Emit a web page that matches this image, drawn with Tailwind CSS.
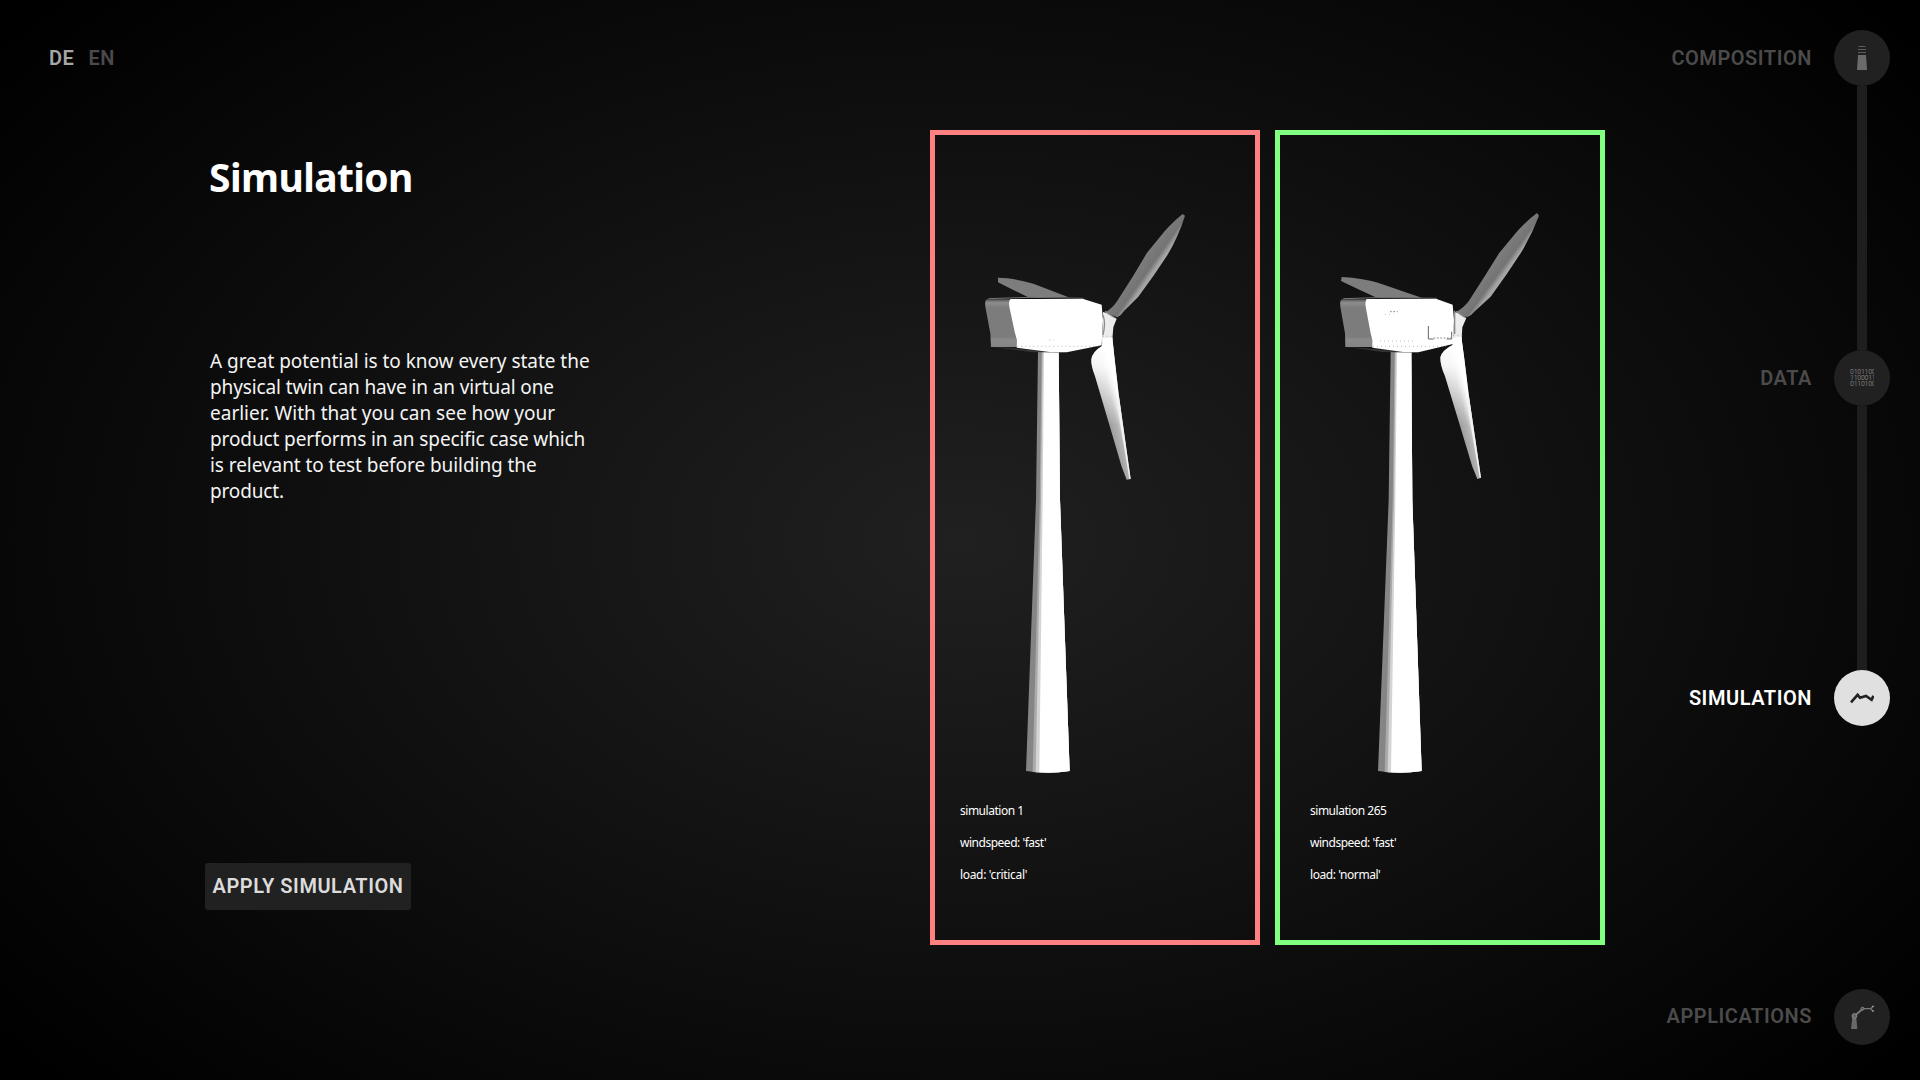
<!DOCTYPE html>
<html lang="en">
<head>
<meta charset="utf-8">
<title>Simulation</title>
<script src="https://cdn.jsdelivr.net/npm/@tailwindcss/browser@4"></script>
</head>
<body class="flex h-screen w-screen overflow-hidden bg-black bg-[radial-gradient(1240px_800px_at_center,#202020,#000)] font-['Noto_Sans',sans-serif] text-white">

<!-- Language switch and description -->
<main class="flex w-[930px] shrink-0 flex-col">
  <header class="flex h-[116px] items-center gap-[14px] pl-[49px] font-[Roboto,sans-serif] text-xl font-semibold tracking-[0.54px]">
    <button class="text-[#a6a6a6]">DE</button>
    <button class="text-[#4b4b4b]">EN</button>
  </header>
  <section class="flex flex-col items-start pl-[205px]">
    <h1 class="mt-[34px] pl-1 text-[39px] leading-[54px] font-bold tracking-[-0.6px]">Simulation</h1>
    <p class="mt-[144px] flex flex-col pl-[5px] text-[19px] leading-[26px] whitespace-nowrap text-[#f4f4f4]">
      <span class="tracking-[-0.03px]">A great potential is to know every state the</span>
      <span class="tracking-[-0.12px]">physical twin can have in an virtual one</span>
      <span>earlier. With that you can see how your</span>
      <span class="tracking-[-0.11px]">product performs in an specific case which</span>
      <span class="tracking-[-0.06px]">is relevant to test before building the</span>
      <span class="tracking-[-0.15px]">product.</span>
    </p>
    <button class="mt-[359px] flex h-[47px] w-[206px] items-center justify-center rounded-[3px] bg-[#212121] pb-px font-[Roboto,sans-serif] text-xl font-semibold tracking-[0.54px] text-[#dcdcdc]">APPLY SIMULATION</button>
  </section>
</main>

<!-- Simulation variants -->
<section class="flex shrink-0 gap-[15px] pt-[130px]">
  <article class="flex h-[815px] w-[330px] flex-col border-5 border-[#ff8080]">
    <svg class="h-[650px] w-[320px] shrink-0" viewBox="45 45 960 1950">
      <defs>
        <linearGradient id="bladeUp" gradientUnits="userSpaceOnUse" x1="650" y1="420" x2="700" y2="455">
          <stop offset="0" stop-color="#808080"/><stop offset=".75" stop-color="#747474"/><stop offset="1" stop-color="#a5a5a5"/>
        </linearGradient>
        <linearGradient id="bladeDown" gradientUnits="userSpaceOnUse" x1="535" y1="865" x2="612" y2="845">
          <stop offset="0" stop-color="#8a8a8a"/><stop offset=".55" stop-color="#b4b4b4"/><stop offset=".85" stop-color="#fff"/>
        </linearGradient>
        <linearGradient id="bladeRoot" x1="0" y1="0" x2="0" y2="1">
          <stop offset="0" stop-color="#fff"/><stop offset=".2" stop-color="#fff" stop-opacity=".9"/><stop offset=".62" stop-color="#fff" stop-opacity="0"/>
        </linearGradient>
        <linearGradient id="tail" x1="0" y1="0" x2="0" y2="1">
          <stop offset="0" stop-color="#555"/><stop offset=".07" stop-color="#8d8d8d"/><stop offset=".18" stop-color="#7c7c7c"/><stop offset=".78" stop-color="#7c7c7c"/><stop offset=".85" stop-color="#8a8a8a"/><stop offset="1" stop-color="#858585"/>
        </linearGradient>
      </defs>
      <path fill="#7d7d7d" d="M234 473 262 475Q325 484 352 496L446 532H325L280 510 234 487Z"/>
      <path fill="url(#bladeUp)" d="M788 282 795 287Q775 350 742 406L700 468 655 530 612 573Q602 588 592 592L556 577Q580 562 592 542L640 467 680 400 735 332Q765 300 788 282Z"/>
      <path fill="#858585" d="M354 695H416L420 1140 449 1953Q384 1962 318 1953L348 1140Z"/>
      <path fill="#aaa" d="M365 695H416L420 1140 449 1953Q400 1961 338 1956L359 1140Z"/>
      <path fill="#d4d4d4" d="M368 695H416L420 1140 449 1953Q400 1961 347 1957L363 1140Z"/>
      <path fill="#fff" d="M372 695H416L420 1140 449 1953Q400 1961 358 1957L368 1140Z"/>
      <path fill="#333" d="M213 680 440 698 330 696Z"/>
      <path fill="url(#tail)" d="M200 538H272L292 681H213L211 640 196 560Q194 542 200 538Z"/>
      <path fill="#fff" d="M272 537H490L545 554 549 600 545 676 440 697H395L290 683Q292 660 285 640L268 560Q265 540 272 537Z"/>
      <path stroke="#777" stroke-width="3" d="M205 536 330 532 490 535"/>
      <path fill="#ececec" d="M549 576 562 580 590 596 580 622 577 658 545 668 549 610Z"/>
      <path fill="none" stroke="#8b8b8b" stroke-width="4" d="M549 585Q558 610 549 645M555 574 585 594"/>
      <path fill="url(#bladeDown)" d="M550 655 577 653 583 710 597 830 632 1077 620 1079 605 1040 525 768Q513 738 514 718 518 695 545 679Z"/>
      <path fill="url(#bladeRoot)" d="M550 655 577 653 583 710 597 830 632 1077 620 1079 605 1040 525 768Q513 738 514 718 518 695 545 679Z"/>
      <path fill="#f2f2f2" d="M597 830 632 1077 628 1077 590 845Z"/>
      <path fill="none" stroke="#999" stroke-width="2" stroke-dasharray="3 9" d="M292 679H545M548 649H578M388 660H402"/>
    </svg>
    <div class="flex flex-col gap-[10px] pt-[15px] pl-[25px] text-xs leading-[22px] tracking-[-0.48px] text-white">
      <p>simulation 1</p>
      <p>windspeed: 'fast'</p>
      <p class="tracking-[-0.33px]">load: 'critical'</p>
    </div>
  </article>

  <article class="flex h-[815px] w-[330px] flex-col border-5 border-[#80ff80]">
    <svg class="h-[650px] w-[320px] shrink-0" viewBox="45 45 960 1950">
      <defs>
        <linearGradient id="bladeUp2" gradientUnits="userSpaceOnUse" x1="674" y1="420" x2="722" y2="455">
          <stop offset="0" stop-color="#808080"/><stop offset=".75" stop-color="#747474"/><stop offset="1" stop-color="#a5a5a5"/>
        </linearGradient>
        <linearGradient id="bladeDown2" gradientUnits="userSpaceOnUse" x1="550" y1="865" x2="627" y2="845">
          <stop offset="0" stop-color="#8a8a8a"/><stop offset=".55" stop-color="#b4b4b4"/><stop offset=".85" stop-color="#fff"/>
        </linearGradient>
      </defs>
      <path fill="#7d7d7d" d="M230 471 262 473Q325 481 352 493L470 533H335L280 508 228 483Z"/>
      <path fill="url(#bladeUp2)" d="M816 279 822 287Q800 345 768 398L725 463 677 530 630 573Q618 588 606 592L572 577Q598 562 612 542L660 467 702 400 758 332Q790 298 816 279Z"/>
      <path fill="#858585" d="M377 695H439L442 1140 470 1953Q405 1962 339 1953L371 1140Z"/>
      <path fill="#aaa" d="M389 695H439L442 1140 470 1953Q420 1961 359 1956L383 1140Z"/>
      <path fill="#d4d4d4" d="M392 695H439L442 1140 470 1953Q420 1961 368 1957L387 1140Z"/>
      <path fill="#fff" d="M396 695H439L442 1140 470 1953Q420 1961 378 1957L391 1140Z"/>
      <path fill="#333" d="M242 680 465 698 352 696Z"/>
      <path fill="url(#tail)" d="M230 538H306L324 681H241L240 640 226 560Q224 542 230 538Z"/>
      <path fill="#fff" d="M306 537H515L563 554 567 600 564 672 460 697H420L322 683Q324 660 317 640L302 560Q300 540 306 537Z"/>
      <path stroke="#777" stroke-width="3" d="M235 536 335 533 515 535"/>
      <path fill="#ececec" d="M568 576 580 580 604 594 592 622 590 658 563 668 567 610Z"/>
      <path fill="none" stroke="#8b8b8b" stroke-width="4" d="M569 572V642M574 574 600 592"/>
      <path fill="url(#bladeDown2)" d="M563 655 589 650 597 710 612 830 648 1073 637 1077 622 1040 540 768Q526 738 526 712 530 692 563 675Z"/>
      <path fill="url(#bladeRoot)" d="M563 655 589 650 597 710 612 830 648 1073 637 1077 622 1040 540 768Q526 738 526 712 530 692 563 675Z"/>
      <path fill="#f2f2f2" d="M612 830 648 1073 644 1073 605 845Z"/>
      <path fill="none" stroke="#666" stroke-width="3" d="M490 618V657H506M560 635V657H545"/>
      <path fill="none" stroke="#888" stroke-width="3" stroke-dasharray="5 5" d="M506 654H560M375 575H398"/>
      <path fill="none" stroke="#999" stroke-width="2" stroke-dasharray="3 9" d="M324 679H560M345 663H450M360 583H385M565 646H592"/>
    </svg>
    <div class="flex flex-col gap-[10px] pt-[15px] pl-[30px] text-xs leading-[22px] tracking-[-0.48px] text-white">
      <p>simulation 265</p>
      <p>windspeed: 'fast'</p>
      <p class="tracking-[-0.44px]">load: 'normal'</p>
    </div>
  </article>
</section>

<!-- Chapter navigation -->
<nav class="ml-auto flex flex-col items-end pt-[30px] pr-[30px] font-[Roboto,sans-serif] text-xl font-semibold tracking-[0.54px] text-[#4b4b4b]">
  <a class="flex h-14 items-center gap-[22px]">
    <span>COMPOSITION</span>
    <span class="flex size-14 items-center justify-center rounded-full bg-[#212121]">
      <svg class="h-6 w-3" viewBox="0 0 12 24"><path fill="#6b6b6b" d="M2 9h8L11 24H1Z"/><path stroke="#5c5c5c" d="M2.5.5h7M2 3.5h8M2 6.5h8"/></svg>
    </span>
  </a>
  <div class="mr-[23px] h-[264px] w-[10px] bg-[#1e1e1e]"></div>
  <a class="flex h-14 items-center gap-[22px]">
    <span>DATA</span>
    <span class="flex size-14 items-center justify-center rounded-full bg-[#212121]">
      <span class="flex w-6 flex-col overflow-hidden text-[7px] leading-[6px] font-normal tracking-[-0.3px] whitespace-nowrap text-[#777]"><span>0101100</span><span>1100011</span><span>0110100</span></span>
    </span>
  </a>
  <div class="mr-[23px] h-[264px] w-[10px] bg-[#1e1e1e]"></div>
  <a class="flex h-14 items-center gap-[22px] text-white">
    <span>SIMULATION</span>
    <span class="flex size-14 items-center justify-center rounded-full bg-[#e0e0e0]">
      <svg class="size-6" viewBox="0 0 24 24" fill="none"><path stroke="#222" stroke-width="2.6" d="M1 16.3 7.6 8.8 10 11.8 16 10 21.6 13.8 23.4 9.8"/></svg>
    </span>
  </a>
  <a class="mt-[263px] flex h-14 items-center gap-[22px]">
    <span class="pb-0.5">APPLICATIONS</span>
    <span class="flex size-14 items-center justify-center rounded-full bg-[#212121]">
      <svg class="size-6" viewBox="0 0 24 24" fill="none"><path fill="#696969" d="M2.3 12.5h4L7.3 24H1Z"/><path stroke="#777" stroke-width="2" d="M5 10.5 12 4.500"/><path stroke="#777" stroke-width="1.300" d="M13 3.700H20M23.300 1.300 20.500 3.700 23.300 6.200"/><circle cx="4.400" cy="11" r="2.400" fill="#666" stroke="#888"/><circle cx="12.500" cy="3.700" r="1.500" fill="#555" stroke="#888"/><path fill="#bbb" d="M22.400.8h1.300v1.300h-1.300zM22.400 5.500h1.300v1.300h-1.300z"/></svg>
    </span>
  </a>
</nav>
</body>
</html>
